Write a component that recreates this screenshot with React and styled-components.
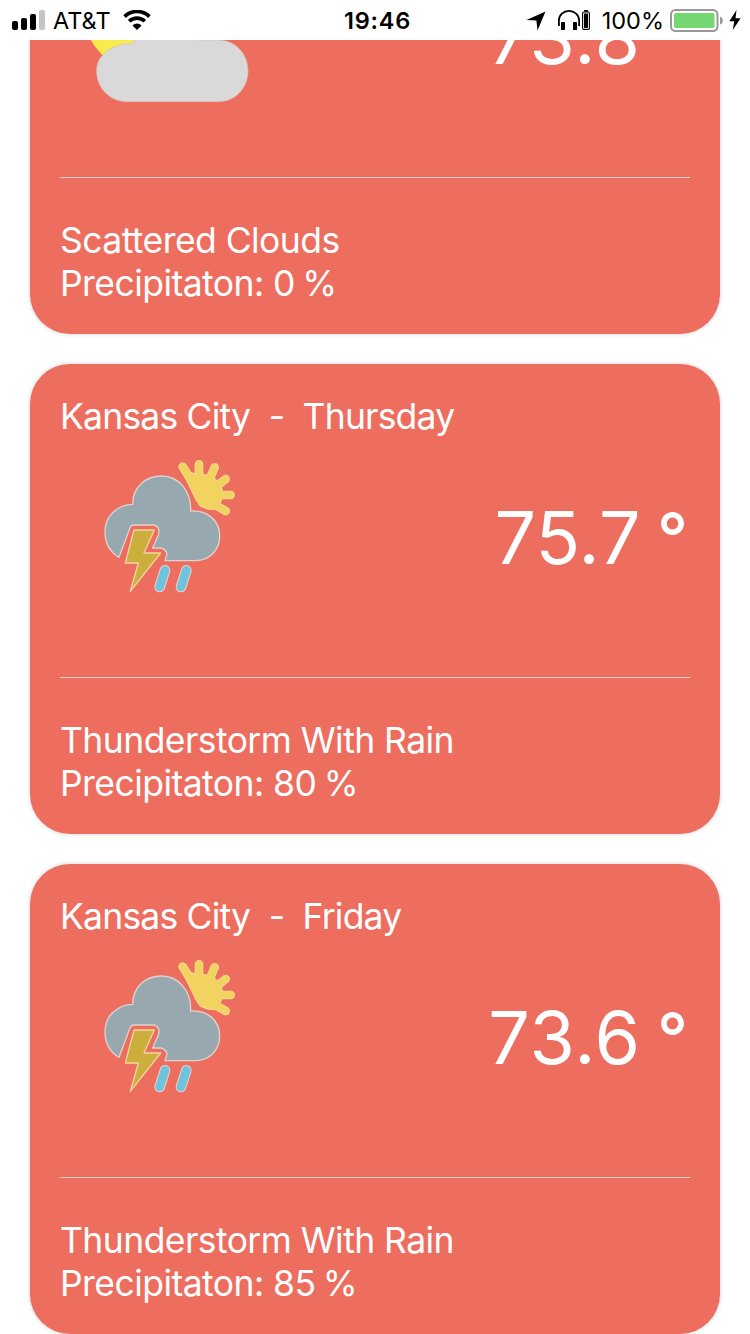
import React from 'react';
import styled, { createGlobalStyle } from 'styled-components';

const GlobalStyle = createGlobalStyle`
  * { box-sizing: border-box; }
  body {
    margin: 0;
    background: #fff;
    font-family: Inter, "Liberation Sans", sans-serif;
    -webkit-font-smoothing: antialiased;
  }
`;

const Screen = styled.div`
  display: flex;
  flex-direction: column;
  width: 750px;
  height: 1334px;
  overflow: hidden;
  background: #fff;
`;

const StatusBar = styled.header`
  flex: none;
  display: grid;
  grid-template-columns: 1fr auto 1fr;
  align-items: center;
  height: 40px;
  padding: 0 9px 0 12px;
  color: #000;
`;

const StatusGroup = styled.div`
  display: flex;
  align-items: center;
  justify-content: ${(p) => (p.$end ? 'flex-end' : 'flex-start')};
  height: 40px;
`;

const StatusIcon = styled.svg`
  flex: none;
  display: block;
  margin-left: ${(p) => p.$gap || 0}px;
  margin-top: ${(p) => p.$drop || 0}px;
`;

const StatusText = styled.span`
  padding-top: 2px;
  font-size: 23.5px;
  line-height: 38px;
  white-space: nowrap;
  margin-left: ${(p) => p.$gap || 0}px;
`;

const Clock = styled.span`
  padding: 2px 0 0 2px;
  font-size: 23.5px;
  font-weight: 600;
  line-height: 38px;
  letter-spacing: 0.8px;
`;

const Feed = styled.main`
  flex: 1;
  min-height: 0;
  overflow: hidden;
  padding: 0 30px;
`;

const CardList = styled.div`
  display: flex;
  flex-direction: column;
  gap: 30px;
  margin-top: -176px;
`;

const CardBox = styled.article`
  flex: none;
  display: flex;
  flex-direction: column;
  height: 470px;
  padding: 31px 30px 29px;
  border-radius: 40px;
  background: #ed6e5f;
  box-shadow: 0 0 4px rgba(0, 0, 0, 0.2);
  color: #fff;
`;

const CardText = styled.div`
  font-size: 35.5px;
  line-height: 43px;
  white-space: pre;
  letter-spacing: ${(p) => p.$tracking || -0.56}px;
`;

const Percent = styled.span`
  margin-left: -2px;
`;

const Conditions = styled.div`
  display: flex;
  justify-content: space-between;
  height: 240px;
  padding: 12px 0 0 30px;
`;

const WeatherIcon = styled.svg`
  flex: none;
  width: 170px;
  height: 170px;
`;

const Temperature = styled.div`
  display: flex;
  padding-right: 2px;
  height: 176px;
  font-size: 73.5px;
  line-height: 176px;
  white-space: pre;
  letter-spacing: ${(p) => p.$tracking || 0}px;
`;

const Degree = styled.span`
  margin-left: 16px;
  font-size: 68px;
  font-weight: 500;
  line-height: 174px;
  letter-spacing: 0;
`;

const Divider = styled.hr`
  flex: none;
  width: 100%;
  height: 1px;
  margin: 0 0 41px;
  border: 0;
  background: #f9d3ce;
`;

function StormIcon() {
  return (
    <WeatherIcon viewBox="0 0 510 510">
      <path d="M278 50L325 125M327 43V115M374 52L345 120M407 87L360 125M422 135H350M407 183L350 150" fill="none" stroke="#f4dc98" strokeWidth="26" strokeLinecap="round" />
      <path d="M272 55L318 150L330 168Q350 180 372 179Q394 165 398 137Q399 103 375 86Q352 70 318 73Z" fill="#f2d35f" stroke="#f4dc98" strokeWidth="3" />
      <path d="M278 50L325 125M327 43V115M374 52L345 120M407 87L360 125M422 135H350M407 183L350 150" fill="none" stroke="#f2d35f" strokeWidth="21" strokeLinecap="round" />
      <path
        d="M87 322C59 305 45 280 45 245C45 198 82 164 128 163C128 112 166 78 214 78C266 78 304 122 302 183C351 180 389 210 389 258C389 300 359 332 317 332H225L231 313Q229 298 213 294H188L205 255Q212 229 191 225H132Q121 225 118 239Z"
        fill="#97a8ae"
        stroke="#dfd2cf"
        strokeWidth="4"
      />
      <path d="M132 240H193L162 309H212L121 424L145 339H106Z" fill="#ccae3c" stroke="#f1d5a2" strokeWidth="4" strokeLinejoin="round" />
      <path d="M225 361L209 411M289 361L273 411" stroke="#efd0ca" strokeWidth="32" strokeLinecap="round" />
      <path d="M225 361L209 411M289 361L273 411" stroke="#70c3dc" strokeWidth="26" strokeLinecap="round" />
    </WeatherIcon>
  );
}

function ScatteredIcon() {
  return (
    <WeatherIcon viewBox="0 0 510 510">
      <path d="M0 200C40 90 190 90 220 200L123 300L38 316Q12 290 2 268Z" fill="#f8eb4b" />
      <path
        d="M112 455C60 455 20 415 20 363C20 315 65 280 131 280V240C150 170 210 145 270 170C320 190 330 230 320 270H382C438 270 474 313 474 363C474 410 440 455 384 455Z"
        fill="#d9d9d9"
        stroke="#e5bdb6"
        strokeWidth="2"
      />
    </WeatherIcon>
  );
}

function WeatherCard({ title, icon, temp, tempTracking, summary, precipitation }) {
  return (
    <CardBox>
      <CardText $tracking={-0.79}>{title}</CardText>
      <Conditions>
        {icon}
        <Temperature $tracking={tempTracking}>
          <span>{temp}</span>
          <Degree>°</Degree>
        </Temperature>
      </Conditions>
      <Divider />
      <CardText>{summary}</CardText>
      <CardText>
        {'Precipitaton: ' + precipitation + ' '}
        <Percent>%</Percent>
      </CardText>
    </CardBox>
  );
}

export default function App() {
  return (
    <>
      <GlobalStyle />
      <Screen>
        <StatusBar>
          <StatusGroup>
            <StatusIcon width="33" height="20" viewBox="0 0 33 20">
              <rect x="0" y="11" width="6" height="9" rx="2" />
              <rect x="9" y="8" width="6" height="12" rx="2" />
              <rect x="18" y="4" width="6" height="16" rx="2" />
              <rect x="27" y="0" width="6" height="20" rx="2" fill="#c4c4c4" />
            </StatusIcon>
            <StatusText $gap={8}>AT&amp;T</StatusText>
            <StatusIcon $gap={12} width="28" height="20" viewBox="0 0 28 20">
              <path d="M1.6 6.6A17.6 17.6 0 0 1 26.4 6.6M6.2 11.3A11.1 11.1 0 0 1 21.8 11.3" fill="none" stroke="#000" strokeWidth="3.7" />
              <path d="M14 20L9.4 15.4A6.5 6.5 0 0 1 18.6 15.4Z" />
            </StatusIcon>
          </StatusGroup>
          <Clock>19:46</Clock>
          <StatusGroup $end>
            <StatusIcon width="20" height="20" viewBox="0 0 20 20" $drop={1}>
              <path d="M19.5 0.5L11.5 19.5L10.4 9.6L0.5 9Z" />
            </StatusIcon>
            <StatusIcon $gap={12} width="32" height="20" viewBox="0 0 32 20">
              <path d="M0.9 16V10.5A10.1 9.6 0 0 1 21.1 10.5V16" fill="none" stroke="#000" strokeWidth="1.8" />
              <rect x="3" y="12" width="4" height="8" rx="0.6" />
              <rect x="15" y="12" width="4" height="8" rx="0.6" />
              <rect x="24.6" y="2" width="6.8" height="17.4" rx="1.2" fill="#fff" stroke="#000" strokeWidth="1.1" />
              <rect x="26" y="0" width="4" height="1.8" rx="0.5" />
              <rect x="26" y="3.5" width="4" height="14.4" />
            </StatusIcon>
            <StatusText $gap={12}>100%</StatusText>
            <StatusIcon $gap={6} $drop={1} width="54" height="23" viewBox="0 0 54 23">
              <rect x="1" y="1" width="46.5" height="21" rx="4.5" fill="#fff" stroke="#999" strokeWidth="2" />
              <rect x="4" y="4" width="40.5" height="15" rx="1.8" fill="#76d672" />
              <path d="M50 7.5Q52.8 8.5 52.8 11.5Q52.8 14.5 50 15.5Z" fill="#999" />
            </StatusIcon>
            <StatusIcon $gap={5} width="12" height="20" viewBox="0 0 12 20">
              <path d="M7.5 0L0.3 11.2H5.2L3.8 20L11.6 8.2H6.5Z" />
            </StatusIcon>
          </StatusGroup>
        </StatusBar>
        <Feed>
          <CardList>
            <WeatherCard
              title="Kansas City  -  Wednesday"
              icon={<ScatteredIcon />}
              temp="73.8"
              tempTracking={0.9}
              summary="Scattered Clouds"
              precipitation={0}
            />
            <WeatherCard
              title="Kansas City  -  Thursday"
              icon={<StormIcon />}
              temp="75.7"
              tempTracking={0.3}
              summary="Thunderstorm With Rain"
              precipitation={80}
            />
            <WeatherCard
              title="Kansas City  -  Friday"
              icon={<StormIcon />}
              temp="73.6"
              tempTracking={0.9}
              summary="Thunderstorm With Rain"
              precipitation={85}
            />
          </CardList>
        </Feed>
      </Screen>
    </>
  );
}
